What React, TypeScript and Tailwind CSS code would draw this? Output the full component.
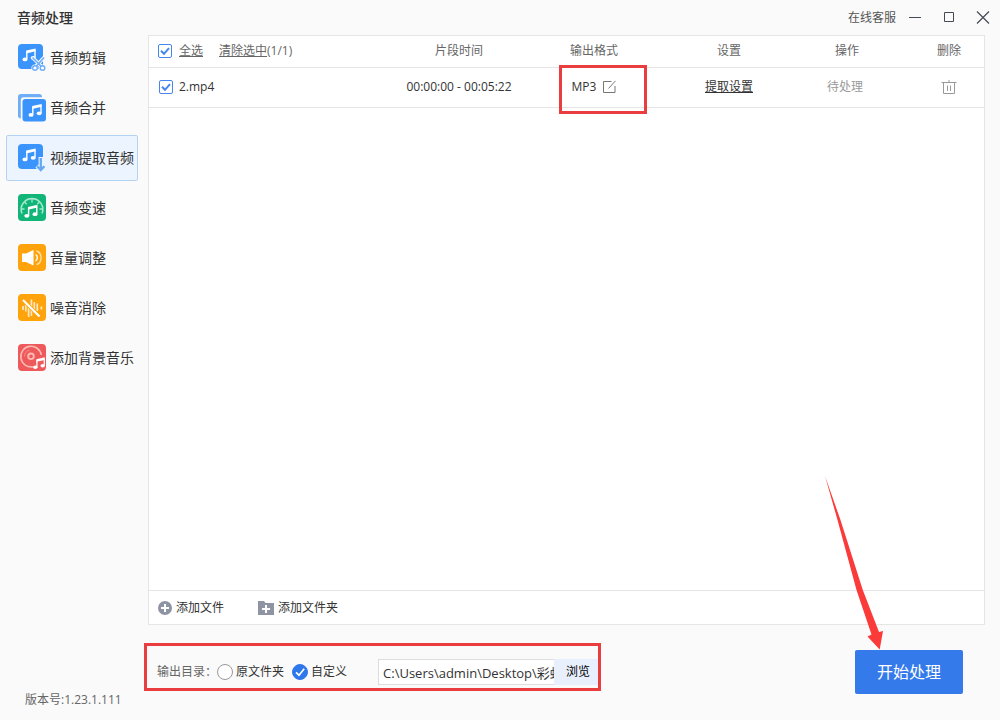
import { useState, type ReactNode } from "react";

const NAV_ITEMS = [
  { id: "cut", label: "音频剪辑", icon: <CutIcon /> },
  { id: "merge", label: "音频合并", icon: <MergeIcon /> },
  { id: "extract", label: "视频提取音频", icon: <ExtractIcon /> },
  { id: "speed", label: "音频变速", icon: <SpeedIcon /> },
  { id: "volume", label: "音量调整", icon: <VolumeIcon /> },
  { id: "denoise", label: "噪音消除", icon: <DenoiseIcon /> },
  { id: "bgm", label: "添加背景音乐", icon: <BgmIcon /> },
];

const FILES = [
  { name: "2.mp4", time: "00:00:00 - 00:05:22", format: "MP3", status: "待处理" },
];

function IconBase({ children }: { children: ReactNode }) {
  return (
    <svg viewBox="0 0 28 28" className="size-7 shrink-0" fill="none" aria-hidden="true">
      {children}
    </svg>
  );
}

// beamed pair of notes, drawn in a 14x14 box
function Note({ x, y, scale = 1 }: { x: number; y: number; scale?: number }) {
  return (
    <g transform={`translate(${x} ${y}) scale(${scale})`}>
      <path d="M4.2 2.6 13.6.4V3.2L4.2 5.4Z" fill="#fff" />
      <path d="M4.8 3.5V11M13 2V9.4" stroke="#fff" strokeWidth="1.4" />
      <ellipse cx="3" cy="11.4" rx="2.5" ry="1.9" fill="#fff" />
      <ellipse cx="11.2" cy="9.8" rx="2.5" ry="1.9" fill="#fff" />
    </g>
  );
}

function CutIcon() {
  return (
    <IconBase>
      <rect width="25" height="25" rx="4" fill="#3b94fb" />
      <Note x={4} y={4} />
      <path d="m14.5 13.5 9.7 9.5M26 13.5 17.3 23" stroke="#fafafa" strokeWidth="3.4" />
      <circle cx="17" cy="24" r="3.6" fill="#fafafa" />
      <circle cx="24.5" cy="24" r="3.6" fill="#fafafa" />
      <path d="m14.5 13.5 8.6 8.7M26 13.5l-7.6 8.7" stroke="#6aaefb" strokeWidth="1.6" />
      <circle cx="17" cy="24" r="2.3" stroke="#6aaefb" strokeWidth="1.4" />
      <circle cx="24.5" cy="24" r="2.3" stroke="#6aaefb" strokeWidth="1.4" />
    </IconBase>
  );
}

function MergeIcon() {
  return (
    <IconBase>
      <rect width="24" height="24.5" rx="3" fill="#6fadf7" />
      <rect x="2.8" y="3.2" width="27" height="26" rx="3" fill="#fafafa" />
      <rect x="4.5" y="5" width="23.5" height="22.5" rx="3" fill="#3b94fb" />
      <Note x={10} y={9.5} />
    </IconBase>
  );
}

function ExtractIcon() {
  return (
    <IconBase>
      <rect width="25" height="25" rx="4" fill="#3b94fb" />
      <Note x={4} y={4} />
      <path d="M22.8 13v12.6M19 22l3.8 4 3.8-4" stroke="#ebf4ff" strokeWidth="4.4" />
      <path d="M22.8 14v12M19.2 22.2l3.6 3.8 3.6-3.8" stroke="#65a9f5" strokeWidth="2.3" />
    </IconBase>
  );
}

function SpeedIcon() {
  return (
    <IconBase>
      <rect width="28" height="27" rx="4" fill="#12b578" />
      <path d="M4 19.5a10.8 10.8 0 1 1 20 0" stroke="#a3e8cd" strokeWidth="1.6" />
      <path d="M14 5v3.5M6.5 8l2.2 2.3M21.5 8l-2.2 2.3M3.5 15h3M24.5 15h-3" stroke="#a3e8cd" strokeWidth="1.3" />
      <Note x={5.8} y={10.4} />
    </IconBase>
  );
}

function VolumeIcon() {
  return (
    <IconBase>
      <rect width="28" height="27" rx="4" fill="#ffa30d" />
      <path d="M4 9.5h4L15.5 6v15.5L8 18H4Z" fill="#fff" />
      <path d="M17.5 10.5a3.8 3.8 0 0 1 0 6.5" stroke="#fff" strokeWidth="1.4" />
      <path d="M18.5 7c6 1.8 6 11.7 0 13.5" stroke="#ffe0a8" strokeWidth="1.4" />
    </IconBase>
  );
}

function DenoiseIcon() {
  return (
    <IconBase>
      <rect width="28" height="27" rx="4" fill="#ffa30d" />
      <path
        d="M5 12v4M7.8 10v7.5M10.6 12v11M13.4 5.5V22M16.3 8v11M19.3 9.5v7.5M23.4 12.5v3"
        stroke="#ffe9bd"
        strokeWidth="1.7"
      />
      <path d="m5 6 16.5 16.5" stroke="#ffa30d" strokeWidth="3.8" />
      <path d="m5 6 16.5 16.5" stroke="#fff" strokeWidth="2.1" />
    </IconBase>
  );
}

function BgmIcon() {
  return (
    <IconBase>
      <rect width="28" height="27" rx="4" fill="#ee5a5c" />
      <path d="M15 22.7A10.3 10.3 0 1 1 23.3 11" stroke="#ffb9b0" strokeWidth="1.6" />
      <circle cx="13" cy="12.3" r="2.8" stroke="#ffb9b0" strokeWidth="1.9" />
      <path d="M6.5 12.5a6.5 6.5 0 0 1 5-6.2" stroke="#f58e88" strokeWidth="1" />
      <Note x={14.6} y={13} scale={0.9} />
    </IconBase>
  );
}

function Checkbox({ label, checked, onChange }: { label: string; checked: boolean; onChange: (v: boolean) => void }) {
  return (
    <span className="relative inline-block size-3.5 shrink-0">
      <input
        type="checkbox"
        aria-label={label}
        checked={checked}
        onChange={(e) => onChange(e.target.checked)}
        className="block size-3.5 appearance-none rounded-xs border border-[#4684ee] bg-white"
      />
      {checked && (
        <svg viewBox="0 0 14 14" className="pointer-events-none absolute inset-0 size-3.5" fill="none">
          <path d="m3 6.8 3 3 5-5.6" stroke="#4684ee" strokeWidth="2" />
        </svg>
      )}
    </span>
  );
}

function Radio({ label, checked, onChange }: { label: string; checked: boolean; onChange: () => void }) {
  return (
    <label className="flex items-center gap-[3px]">
      <span className="relative size-4 shrink-0">
        <input
          type="radio"
          name="output"
          checked={checked}
          onChange={onChange}
          className="block size-4 appearance-none rounded-full border border-[#999] bg-white checked:border-[#2f78ec] checked:bg-[#2f78ec]"
        />
        {checked && (
          <svg viewBox="0 0 16 16" className="pointer-events-none absolute inset-0 size-4" fill="none">
            <path d="m4 8.3 3 2.9 5.2-6.4" stroke="#fff" strokeWidth="1.6" />
          </svg>
        )}
      </span>
      {label}
    </label>
  );
}

export default function App() {
  const [active, setActive] = useState("extract");
  const [checked, setChecked] = useState(true);
  const [output, setOutput] = useState("custom");
  const [path, setPath] = useState("C:\\Users\\admin\\Desktop\\彩虹");

  return (
    <div className="flex min-h-screen flex-col bg-[#fafafa] font-['Open_Sans','Noto_Sans_CJK_SC',sans-serif] text-xs text-[#333]">
      <header className="flex h-[35px] shrink-0 items-center justify-between pr-2.5 pl-[17px]">
        <h1 className="text-sm font-medium">音频处理</h1>
        <div className="flex items-center">
          <a href="#service" className="mr-3 text-[#555]">在线客服</a>
          <div className="flex gap-5">
            <button type="button" aria-label="最小化">
              <svg viewBox="0 0 14 14" className="size-3.5" stroke="#444a55" fill="none">
                <path d="M1 6.5h12" />
              </svg>
            </button>
            <button type="button" aria-label="最大化">
              <svg viewBox="0 0 14 14" className="size-3.5" stroke="#444a55" fill="none">
                <path d="M2.5 1.5h9v9h-9z" />
              </svg>
            </button>
            <button type="button" aria-label="关闭">
              <svg viewBox="0 0 14 14" className="size-3.5" stroke="#444a55" strokeWidth="1.2" fill="none">
                <path d="m1 .5 12 12M13 .5l-12 12" />
              </svg>
            </button>
          </div>
        </div>
      </header>

      <div className="flex flex-1">
        <aside className="flex w-[148px] shrink-0 flex-col justify-between pl-1.5">
          <nav className="flex w-[132px] flex-col gap-1">
            {NAV_ITEMS.map((item) => (
              <button
                key={item.id}
                type="button"
                onClick={() => setActive(item.id)}
                className={`flex h-[46px] items-center gap-1 rounded-xs border pl-[11px] text-sm whitespace-nowrap ${
                  active === item.id ? "border-[#b3d3f5] bg-[#ebf4ff]" : "border-transparent"
                }`}
              >
                {item.icon}
                {item.label}
              </button>
            ))}
          </nav>
          <p className="pb-3 pl-[19px] text-[#666]">版本号:1.23.1.111</p>
        </aside>

        <main className="flex min-w-0 flex-1 flex-col pr-[15px]">
          <section className="flex flex-1 flex-col border border-[#e5e5e5] bg-white">
            <table className="w-full table-fixed">
              <colgroup>
                <col />
                <col className="w-[134px]" />
                <col className="w-[136px]" />
                <col className="w-[134px]" />
                <col className="w-[118px]" />
                <col className="w-[70px]" />
              </colgroup>
              <thead className="text-[#666]">
                <tr className="h-[31px] border-b border-[#e5e5e5]">
                  <th className="pl-[9px] font-normal">
                    <div className="flex items-center">
                      <Checkbox label="全选" checked={checked} onChange={setChecked} />
                      <button type="button" onClick={() => setChecked(true)} className="ml-[7px] underline">
                        全选
                      </button>
                      <button type="button" onClick={() => setChecked(false)} className="ml-4 underline">
                        清除选中
                      </button>
                      <span>({checked ? 1 : 0}/1)</span>
                    </div>
                  </th>
                  <th className="font-normal">片段时间</th>
                  <th className="font-normal">输出格式</th>
                  <th className="font-normal">设置</th>
                  <th className="pr-4 font-normal">操作</th>
                  <th className="font-normal">删除</th>
                </tr>
              </thead>
              <tbody>
                {FILES.map((file) => (
                  <tr key={file.name} className="h-10 border-b border-[#e5e5e5] text-center">
                    <td className="pl-2.5">
                      <div className="flex items-center gap-1.5">
                        <Checkbox label={file.name} checked={checked} onChange={setChecked} />
                        <span>{file.name}</span>
                      </div>
                    </td>
                    <td className="whitespace-nowrap">{file.time}</td>
                    <td>
                      <div className="relative flex items-center justify-center gap-1.5">
                        {file.format}
                        <button type="button" aria-label="修改格式">
                          <svg viewBox="0 0 14 14" className="size-3.5" stroke="#777" fill="none">
                            <path d="M9.5 1.5h-8v11h11.5V6M6.5 8.5 13.5.8" />
                          </svg>
                        </button>
                        <span className="pointer-events-none absolute -top-3.5 right-[15px] -bottom-[19px] left-[33px] border-3 border-[#ea3d3f]" />
                      </div>
                    </td>
                    <td>
                      <button type="button" className="underline">提取设置</button>
                    </td>
                    <td className="pr-5 text-[#999]">{file.status}</td>
                    <td>
                      <button type="button" aria-label="删除" className="align-middle">
                        <svg viewBox="0 0 16 16" className="size-4" stroke="#999" fill="none">
                          <path d="M.5 3.5h15M8 1v2.5M2.5 3.5v11h11v-11M6.5 6.5v5.5M9.5 6.5v5.5" />
                        </svg>
                      </button>
                    </td>
                  </tr>
                ))}
              </tbody>
            </table>

            <div className="mt-auto flex h-[34px] items-center gap-[34px] border-t border-[#e5e5e5] pl-[9px]">
              <button type="button" className="flex items-center gap-1">
                <svg viewBox="0 0 14 14" className="size-3.5">
                  <circle cx="7" cy="7" r="7" fill="#8f94a3" />
                  <path d="M7 3v8M3 7h8" stroke="#fff" strokeWidth="2" />
                </svg>
                添加文件
              </button>
              <button type="button" className="flex items-center gap-1">
                <svg viewBox="0 0 16 14" className="h-3.5 w-4">
                  <path d="M0 0h6l1.5 2H16v12H0Z" fill="#8f94a3" />
                  <path d="M8 4v8M4 8h8" stroke="#fff" strokeWidth="2" />
                </svg>
                添加文件夹
              </button>
            </div>
          </section>

          <footer className="flex h-[95px] shrink-0 items-start justify-between pr-[22px]">
            <div className="mt-[18px] -ml-1 flex h-12 items-center border-3 border-[#ea3d3f] pt-2.5 pl-2.5">
              <span className="text-[#666]">输出目录：</span>
              <div className="flex gap-2">
                <Radio label="原文件夹" checked={output === "source"} onChange={() => setOutput("source")} />
                <Radio label="自定义" checked={output === "custom"} onChange={() => setOutput("custom")} />
              </div>
              <input
                type="text"
                aria-label="输出目录"
                value={path}
                onChange={(e) => setPath(e.target.value)}
                className="ml-[31px] h-[26px] w-[176px] border border-r-0 border-[#ddd] bg-white pl-1 text-[13px]"
              />
              <button type="button" className="h-[26px] w-11 bg-[#e9f0fd] pl-1 text-black">
                浏览
              </button>
            </div>

            <div className="relative mt-[25px]">
              <button type="button" className="h-11 w-[108px] rounded-xs bg-[#347aeb] text-base text-white">
                开始处理
              </button>
              <svg viewBox="0 0 60 174" className="pointer-events-none absolute bottom-full -left-[30px] h-[174px] w-[60px]">
                <path d="M0 0 15.5 44 37.8 114 54 156 58 155 54.7 173.5 42.5 160.5 46.5 158.5 31.5 114 12.5 44Z" fill="#fb3a3a" />
              </svg>
            </div>
          </footer>
        </main>
      </div>
    </div>
  );
}
